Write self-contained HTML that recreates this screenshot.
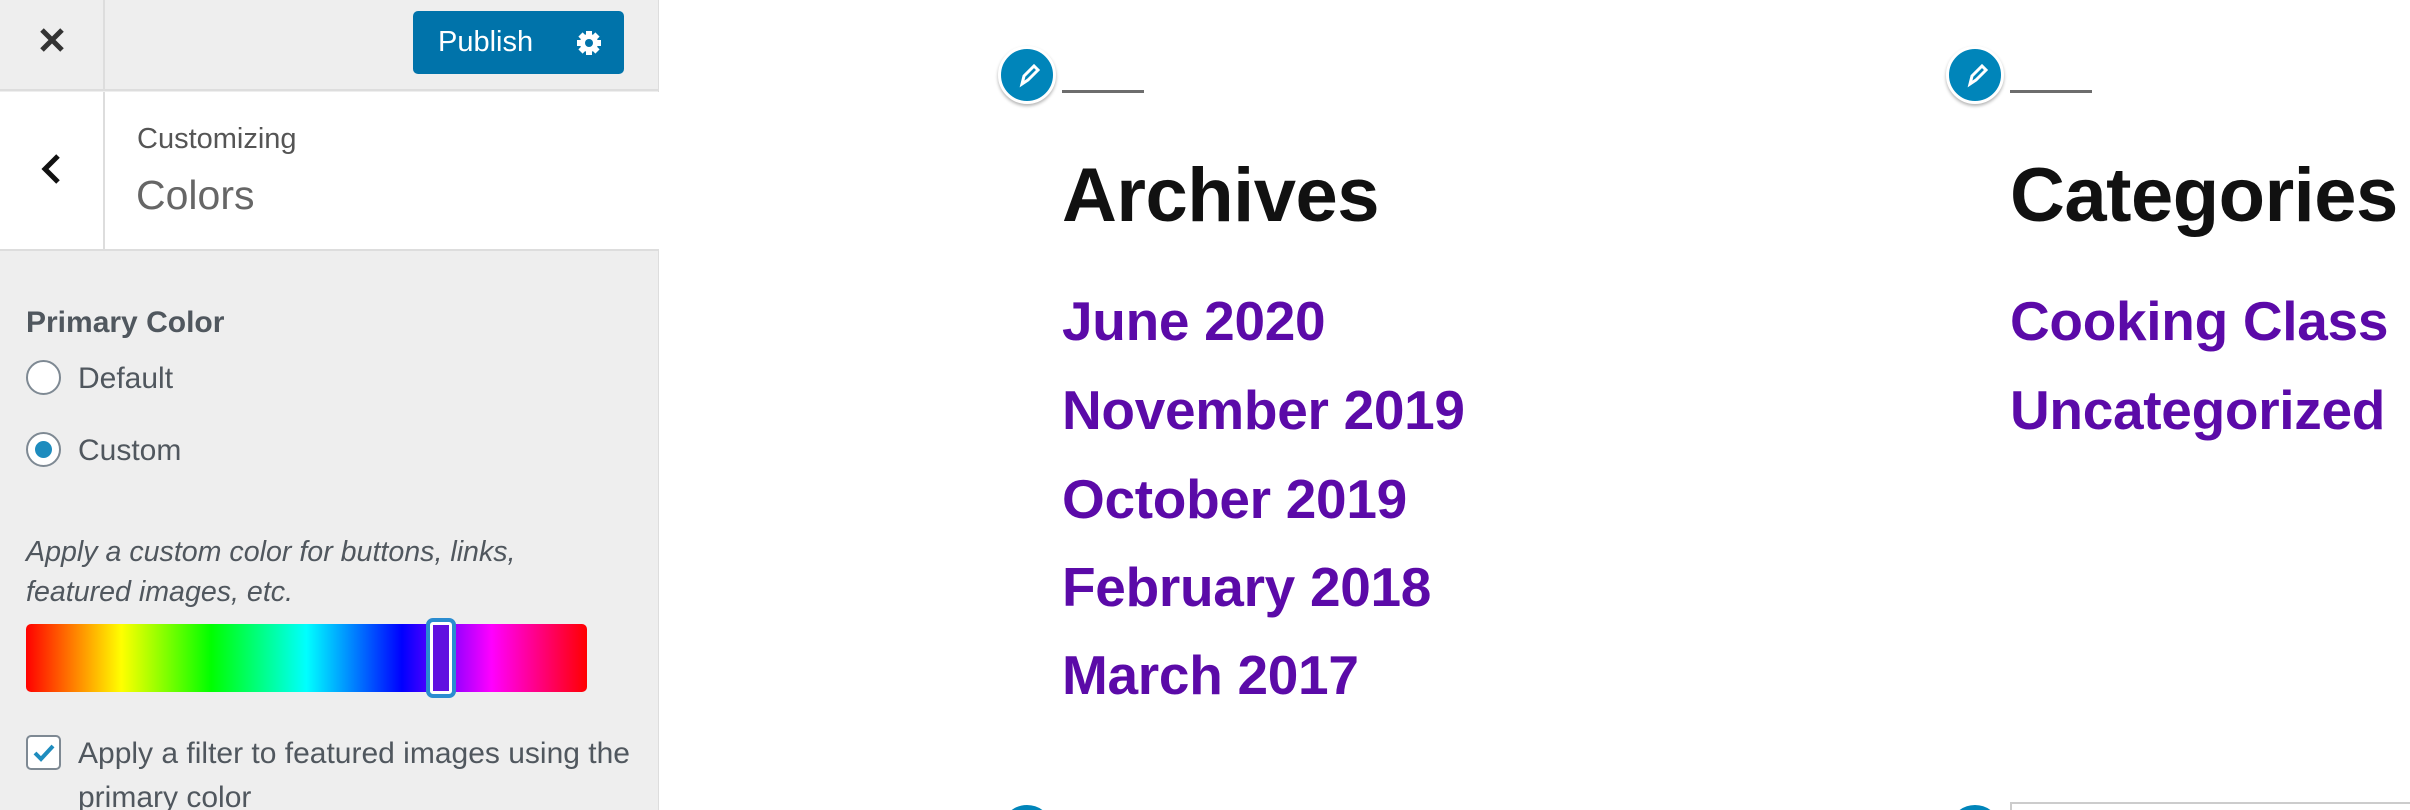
<!DOCTYPE html>
<html><head><meta charset="utf-8"><style>
*{margin:0;padding:0;box-sizing:border-box}
html,body{width:2410px;height:810px;overflow:hidden}
body{background:#fff;font-family:"Liberation Sans",sans-serif;position:relative}
#wrap{position:absolute;left:0;top:0;width:2410px;height:810px;overflow:hidden}
.a{position:absolute;white-space:nowrap}
#side{position:absolute;left:0;top:0;width:659px;height:810px;background:#eee;border-right:1px solid #ddd}
.link{position:absolute;left:1062px;font-weight:bold;font-size:55px;color:#5b0aa8;letter-spacing:-0.3px;line-height:1}
.pen{position:absolute;width:58px;height:58px;border-radius:50%;background:#0085ba;border:3px solid #fff;box-shadow:0 2px 3px rgba(0,0,0,.3)}
</style></head><body><div id="wrap">
<div id="side">
  <div class="a" style="left:0;top:0;width:659px;height:91px;border-bottom:2px solid #ddd"></div>
  <div class="a" style="left:103px;top:0;width:2px;height:91px;background:#ddd"></div>
  <svg class="a" style="left:38px;top:26px" width="28" height="28" viewBox="0 0 28 28"><path d="M4 4L24 24M24 4L4 24" stroke="#333" stroke-width="5"/></svg>
  <div class="a" style="left:413px;top:11px;width:211px;height:63px;background:#0073aa;border-radius:5px;color:#fff;font-size:29px;line-height:63px;padding-left:25px">Publish</div>
  <svg class="a" style="left:574px;top:28px" width="30" height="30" viewBox="0 0 30 30"><g fill="#fff"><circle cx="15" cy="15" r="9"/><g stroke="#fff" stroke-width="6"><path d="M15 3V27M3 15H27M6.5 6.5L23.5 23.5M23.5 6.5L6.5 23.5"/></g></g><circle cx="15" cy="15" r="4" fill="#0073aa"/></svg>
  <div class="a" style="left:0;top:92px;width:659px;height:159px;background:#fff;border-bottom:2px solid #ddd"></div>
  <div class="a" style="left:103px;top:92px;width:2px;height:159px;background:#ddd"></div>
  <svg class="a" style="left:38px;top:152px" width="26" height="34" viewBox="0 0 26 34"><path d="M20 4L7 17L20 30" stroke="#111" stroke-width="5" fill="none"/></svg>
  <div class="a" style="left:137px;top:123px;font-size:29px;color:#555">Customizing</div>
  <div class="a" style="left:136px;top:172px;font-size:41px;color:#666;font-weight:300">Colors</div>
  <div class="a" style="left:26px;top:306px;font-size:30px;font-weight:bold;color:#50575e">Primary Color</div>
  <div class="a" style="left:26px;top:360px;width:35px;height:35px;border-radius:50%;border:2px solid #7e8993;background:#fff"></div>
  <div class="a" style="left:78px;top:362px;font-size:30px;color:#50575e">Default</div>
  <div class="a" style="left:26px;top:432px;width:35px;height:35px;border-radius:50%;border:2px solid #7e8993;background:#fff"></div>
  <div class="a" style="left:35px;top:441px;width:17px;height:17px;border-radius:50%;background:#1e8cbe"></div>
  <div class="a" style="left:78px;top:434px;font-size:30px;color:#50575e">Custom</div>
  <div class="a" style="left:26px;top:532px;font-size:28.6px;font-style:italic;color:#50575e;line-height:40px">Apply a custom color for buttons, links,<br>featured images, etc.</div>
  <div class="a" style="left:26px;top:624px;width:561px;height:68px;border-radius:5px;background:linear-gradient(90deg,#f00 0%,#ff0 17%,#0f0 33%,#0ff 50%,#00f 67%,#f0f 83%,#f00 100%)"></div>
  <div class="a" style="left:426px;top:618px;width:30px;height:80px;border:4px solid #2a8cd0;border-radius:7px;background:#fff"></div>
  <div class="a" style="left:433px;top:625px;width:16px;height:66px;background:#6010e0"></div>
  <div class="a" style="left:26px;top:735px;width:35px;height:35px;border-radius:5px;border:2px solid #7e8993;background:#fff"></div>
  <svg class="a" style="left:31px;top:740px" width="26" height="26" viewBox="0 0 26 26"><path d="M4 13L10 19L22 6" stroke="#1e8cbe" stroke-width="4" fill="none"/></svg>
  <div class="a" style="left:78px;top:732px;font-size:30px;color:#50575e;line-height:44px">Apply a filter to featured images using the<br>primary color</div>
</div>

<div class="pen" style="left:998px;top:46px"></div>
<div class="pen" style="left:1946px;top:46px"></div>
<svg class="a" style="left:1014px;top:60px" width="30" height="30" viewBox="0 0 30 30"><path d="M8 24L10 16L20 6L24 10L14 20Z" fill="none" stroke="#fff" stroke-width="3"/></svg>
<svg class="a" style="left:1962px;top:60px" width="30" height="30" viewBox="0 0 30 30"><path d="M8 24L10 16L20 6L24 10L14 20Z" fill="none" stroke="#fff" stroke-width="3"/></svg>
<div class="a" style="left:1062px;top:90px;width:82px;height:3px;background:#6d6d6d"></div>
<div class="a" style="left:2010px;top:90px;width:82px;height:3px;background:#6d6d6d"></div>
<div class="a" style="left:1062px;top:152px;font-size:76px;font-weight:bold;color:#111;letter-spacing:-0.5px">Archives</div>
<div class="a" style="left:2010px;top:152px;font-size:76px;font-weight:bold;color:#111;letter-spacing:-0.5px">Categories</div>
<div class="link" style="top:294px">June 2020</div>
<div class="link" style="top:383px">November 2019</div>
<div class="link" style="top:472px">October 2019</div>
<div class="link" style="top:560px">February 2018</div>
<div class="link" style="top:648px">March 2017</div>
<div class="link" style="top:294px;left:2010px">Cooking Class</div>
<div class="link" style="top:383px;left:2010px">Uncategorized</div>
<div class="a" style="left:998px;top:802px;width:58px;height:8px;overflow:hidden"><div style="width:58px;height:58px;border-radius:50%;background:#0085ba;border:3px solid #fff"></div></div>
<div class="a" style="left:1946px;top:802px;width:58px;height:8px;overflow:hidden"><div style="width:58px;height:58px;border-radius:50%;background:#0085ba;border:3px solid #fff"></div></div>
<div class="a" style="left:2010px;top:802px;width:400px;height:8px;border-top:2px solid #ccc;border-left:2px solid #ccc"></div>
</div></body></html>
